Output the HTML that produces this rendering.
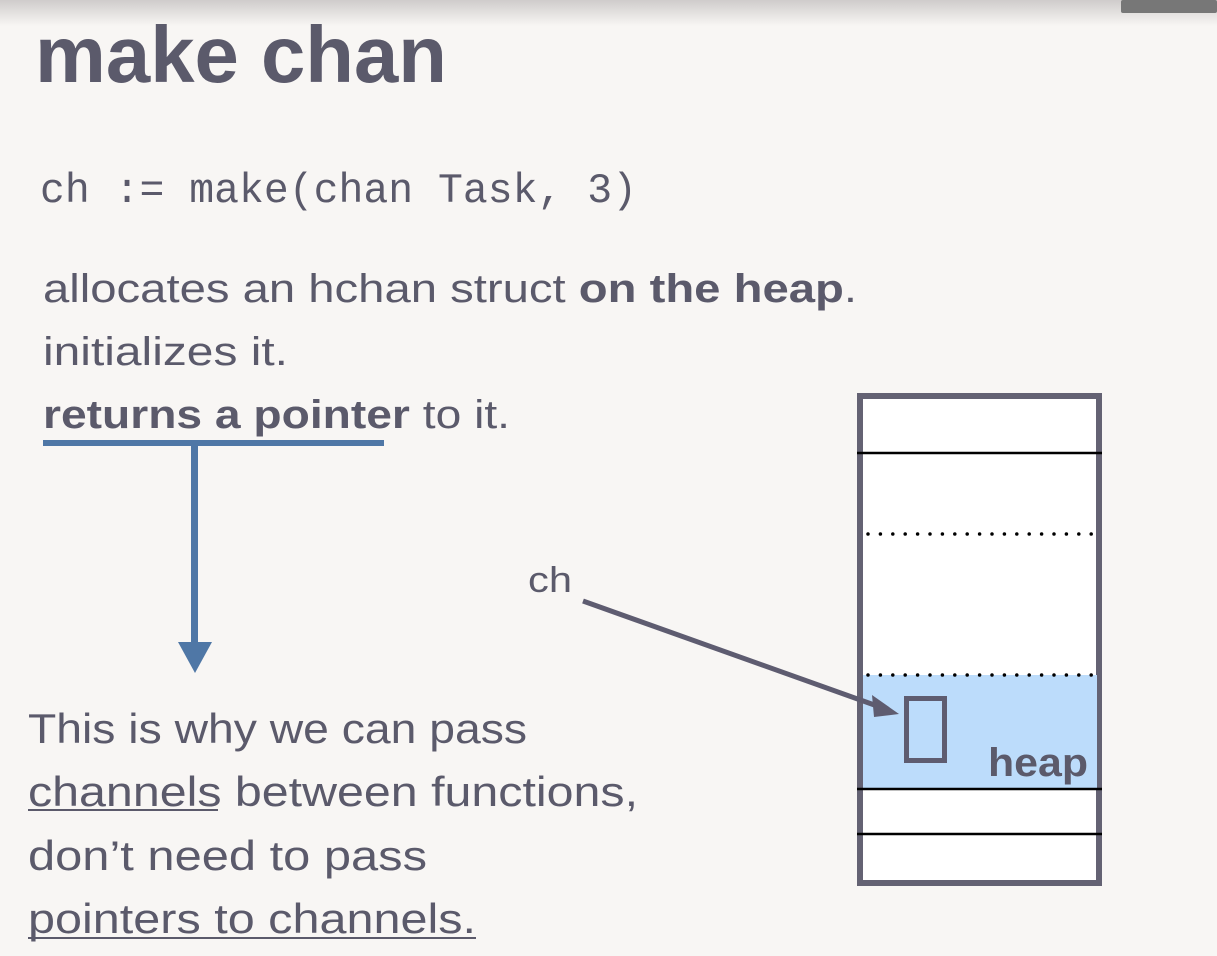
<!DOCTYPE html>
<html><head><meta charset="utf-8"><style>
html,body{margin:0;padding:0;background:#f8f6f4;}
svg{display:block}
text{font-family:"Liberation Sans",sans-serif;fill:#5b5a6b}
</style></head><body>
<svg width="1217" height="956" viewBox="0 0 1217 956">
<defs><linearGradient id="g" x1="0" y1="0" x2="0" y2="1"><stop offset="0" stop-color="#cfcccb"/><stop offset="1" stop-color="#f8f6f4"/></linearGradient></defs>
<rect width="1217" height="956" fill="#f8f6f4"/>
<rect width="1217" height="26" fill="url(#g)"/>
<rect x="1121" y="0" width="96" height="13" rx="2" fill="#777"/>
<text x="35" y="82" font-size="80" font-weight="bold" fill="#5f5e70" textLength="412" lengthAdjust="spacingAndGlyphs">make chan</text>
<text x="40" y="202" font-size="42" style="font-family:'Liberation Mono',monospace" fill="#585766" textLength="597" lengthAdjust="spacingAndGlyphs">ch := make(chan Task, 3)</text>
<text x="43" y="302" font-size="40" textLength="814" lengthAdjust="spacingAndGlyphs">allocates an hchan struct <tspan font-weight="bold">on the heap</tspan>.</text>
<text x="43" y="365" font-size="40" textLength="245" lengthAdjust="spacingAndGlyphs">initializes it.</text>
<text x="43" y="428" font-size="40" textLength="467" lengthAdjust="spacingAndGlyphs"><tspan font-weight="bold">returns a pointer</tspan> to it.</text>
<rect x="43" y="440" width="341" height="6" fill="#4f77a6"/>
<rect x="191" y="443" width="7" height="204" fill="#4f77a6"/>
<polygon points="178,642 212,642 195,673" fill="#4f77a6"/>
<text x="28" y="743" font-size="42" textLength="499" lengthAdjust="spacingAndGlyphs">This is why we can pass</text>
<text x="28" y="806" font-size="42" textLength="610" lengthAdjust="spacingAndGlyphs">channels between functions,</text>
<rect x="28" y="809" width="190" height="2" fill="#5b5a6b"/>
<text x="28" y="870" font-size="42" textLength="399" lengthAdjust="spacingAndGlyphs">don’t need to pass</text>
<text x="28" y="933" font-size="42" textLength="448" lengthAdjust="spacingAndGlyphs">pointers to channels.</text>
<rect x="28" y="937" width="448" height="2" fill="#5b5a6b"/>
<rect x="860" y="396" width="239" height="487" fill="#fff" stroke="#646273" stroke-width="6"/>
<rect x="863" y="675" width="234" height="114" fill="#bcdcfb"/>
<line x1="857" y1="453" x2="1102" y2="453" stroke="#000" stroke-width="2.5"/>
<line x1="868" y1="534" x2="1100" y2="534" stroke="#000" stroke-width="3.5" stroke-dasharray="0 12.4" stroke-linecap="round"/>
<line x1="868" y1="675" x2="1100" y2="675" stroke="#000" stroke-width="3.5" stroke-dasharray="0 12.4" stroke-linecap="round"/>
<line x1="857" y1="789" x2="1102" y2="789" stroke="#000" stroke-width="2.5"/>
<line x1="857" y1="834" x2="1102" y2="834" stroke="#000" stroke-width="2.5"/>
<rect x="906.5" y="698.5" width="38" height="62" fill="none" stroke="#5e5c70" stroke-width="5"/>
<text x="988" y="776" font-size="40" font-weight="bold" fill="#5f5e70" textLength="100" lengthAdjust="spacingAndGlyphs">heap</text>
<text x="528" y="592" font-size="36" textLength="44" lengthAdjust="spacingAndGlyphs">ch</text>
<line x1="583" y1="601" x2="880" y2="707" stroke="#5e5c70" stroke-width="5"/>
<polygon points="899,714 872,695 874,717" fill="#5e5c70"/>
</svg>
</body></html>
